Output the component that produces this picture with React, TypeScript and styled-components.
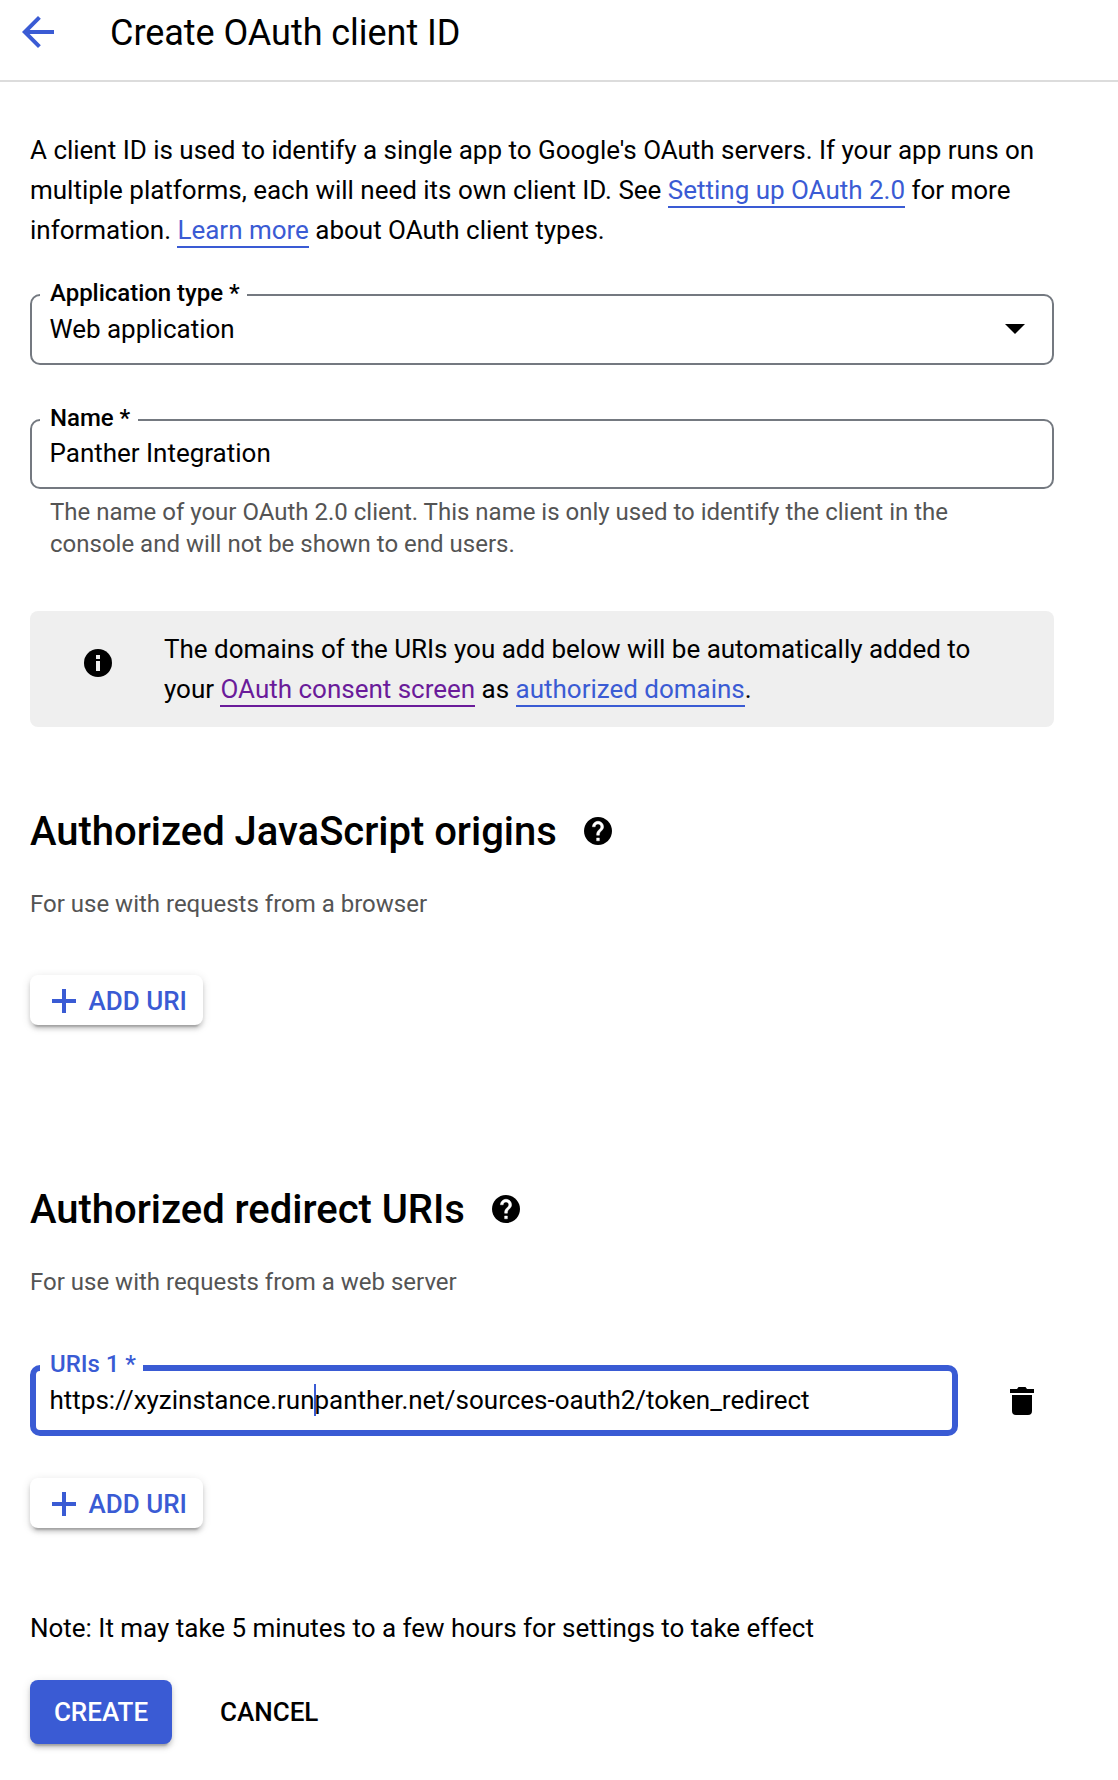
import React from "react";
import styled, { createGlobalStyle, css } from "styled-components";

const BLUE = "#3a5bd4";
const GREY = "#747980";

const GlobalStyle = createGlobalStyle`
  * { box-sizing: border-box; }
  html, body { margin: 0; background: #fff; }
  body { color: #000; font: 400 26px/40px Roboto, "Open Sans", sans-serif; }
`;

const Page = styled.div`
  width: 1118px;
  height: 1780px;
  overflow: hidden;
  background: #fff;
`;

const Header = styled.header`
  display: flex;
  align-items: center;
  height: 82px;
  padding: 0 14px 18px;
  border-bottom: 2px solid #dcdcdc;
`;

const BackIcon = styled.svg`
  width: 48px;
  height: 48px;
  margin-top: 2px;
  fill: ${BLUE};
`;

const Title = styled.h1`
  margin: 4px 0 0 48px;
  font-size: 36px;
  font-weight: 400;
  line-height: 48px;
  letter-spacing: -0.04px;
`;

const Main = styled.main`
  display: flex;
  flex-direction: column;
  padding: 48px 64px 0 30px;
`;

const Intro = styled.p`
  margin: 0;
  letter-spacing: -0.014px;
`;

const Link = styled.a<{ $visited?: boolean }>`
  padding-bottom: 1px;
  color: ${(p) => (p.$visited ? "#6a1b9a" : BLUE)};
  border-bottom: 2px solid currentColor;
`;

const Field = styled.fieldset<{ $active?: boolean; $height: number; $lift: number }>`
  display: flex;
  align-items: center;
  width: 100%;
  min-width: 0;
  margin: 0;
  height: ${(p) => p.$height}px;
  padding: 0 27px ${(p) => p.$lift}px 18px;
  border: 2px solid ${GREY};
  border-radius: 10px;
  ${(p) =>
    p.$active &&
    css`
      width: 928px;
      padding-left: 14px;
      border: 6px solid ${BLUE};
    `}
`;

const Legend = styled.legend<{ $active?: boolean }>`
  margin-left: -10px;
  padding: 0 7.5px 0 10px;
  height: 28px;
  font-size: 24px;
  font-weight: 500;
  line-height: ${(p) => (p.$active ? 20 : 24)}px;
  letter-spacing: -0.03px;
  color: ${(p) => (p.$active ? BLUE : "#000")};
`;

const Value = styled.span`
  flex: 1;
  display: flex;
  margin-left: -0.5px;
  line-height: 32px;
  letter-spacing: -0.01px;
`;

const Caret = styled.i`
  width: 2px;
  height: 32px;
  margin: 0 -1px;
  background: ${BLUE};
`;

const DropArrow = styled.svg`
  width: 20px;
  height: 10px;
`;

const FieldGroup = styled.div<{ $top: number }>`
  margin-top: ${(p) => p.$top}px;
`;

const Hint = styled.p`
  margin: 7px 0 0;
  padding: 0 60px 0 20px;
  font-size: 24px;
  line-height: 32px;
  color: #545454;
`;

const Notice = styled.aside`
  display: flex;
  align-items: flex-start;
  height: 116px;
  margin-top: 51px;
  padding: 18px 52px 18px 54px;
  border-radius: 8px;
  background: #efefef;
`;

const RoundIcon = styled.svg`
  flex: none;
  width: 28px;
  height: 28px;
`;

const InfoIcon = styled(RoundIcon)`
  margin-top: 20px;
`;

const QuestionIcon = styled(RoundIcon)`
  margin-bottom: 2px;
`;

const NoticeText = styled.p`
  margin: 0 0 0 52px;
  letter-spacing: -0.012px;
`;

const Section = styled.section<{ $top: number }>`
  margin-top: ${(p) => p.$top}px;
`;

const HeadingRow = styled.div`
  display: flex;
  align-items: center;
  gap: 27px;
`;

const Heading = styled.h2`
  margin: 0;
  font-size: 40px;
  font-weight: 500;
  line-height: 48px;
  letter-spacing: -0.02px;
`;

const Sub = styled.p`
  margin: 32px 0 0;
  font-size: 24px;
  line-height: 32px;
  color: #545454;
`;

const AddButton = styled.button`
  display: flex;
  align-items: center;
  gap: 12.5px;
  width: 173px;
  height: 50px;
  padding: 2px 0 0 22px;
  border: 0;
  border-radius: 8px;
  background: #fff;
  color: ${BLUE};
  font: 500 26px/40px Roboto, sans-serif;
  white-space: nowrap;
  box-shadow: 0 6px 2px -4px rgba(0, 0, 0, 0.2), 0 4px 4px rgba(0, 0, 0, 0.14), 0 2px 10px rgba(0, 0, 0, 0.12);
`;

const UriRow = styled.div`
  display: flex;
  align-items: center;
`;

const TrashIcon = styled.svg`
  width: 24px;
  height: 28px;
  margin: 12px 0 0 52px;
`;

const Note = styled.p`
  margin: 80px 0 0;
  letter-spacing: -0.014px;
`;

const Actions = styled.div`
  display: flex;
  margin-top: 32px;
`;

const Action = styled.button<{ $primary?: boolean }>`
  height: 64px;
  margin-left: 48px;
  padding: 0;
  border: 0;
  border-radius: 8px;
  background: none;
  color: #000;
  font: 500 26px/40px Roboto, sans-serif;
  ${(p) =>
    p.$primary &&
    css`
      width: 142px;
      margin: 0;
      background: ${BLUE};
      color: #fff;
      box-shadow: 0 6px 2px -4px rgba(0, 0, 0, 0.2), 0 4px 4px rgba(0, 0, 0, 0.14), 0 2px 10px rgba(0, 0, 0, 0.12);
    `}
`;

const HelpIcon = () => (
  <QuestionIcon viewBox="2 2 20 20">
    <path d="M12 2C6.48 2 2 6.48 2 12s4.48 10 10 10 10-4.48 10-10S17.52 2 12 2z" />
    <path
      fill="#fff"
      stroke="#fff"
      strokeWidth="0.3"
      d="M13 19h-2v-2h2v2zm2.07-7.75l-.9.92C13.45 12.9 13 13.5 13 15h-2v-.5c0-1.1.45-2.1 1.17-2.83l1.24-1.26c.37-.36.59-.86.59-1.41 0-1.1-.9-2-2-2s-2 .9-2 2H8c0-2.21 1.790-4 4-4s4 1.790 4 4c0 .88-.36 1.680-.93 2.250z"
    />
  </QuestionIcon>
);

const AddUri = () => (
  <AddButton>
    <svg width="24" height="24" viewBox="0 0 24 24">
      <path d="M10 0h4v10h10v4H14v10h-4V14H0v-4h10z" fill={BLUE} />
    </svg>
    ADD URI
  </AddButton>
);

export default function App() {
  return (
    <Page>
      <GlobalStyle />
      <Header>
        <BackIcon viewBox="0 0 24 24">
          <path d="M20 11H7.83l5.59-5.59L12 4l-8 8 8 8 1.41-1.41L7.83 13H20v-2z" />
        </BackIcon>
        <Title>Create OAuth client ID</Title>
      </Header>
      <Main>
        <Intro>
          A client ID is used to identify a single app to Google's OAuth servers. If your app runs on
          multiple platforms, each will need its own client ID. See <Link>Setting up OAuth 2.0</Link> for
          more information. <Link>Learn more</Link> about OAuth client types.
        </Intro>
        <FieldGroup $top={31}>
          <Field $height={84} $lift={14}>
            <Legend>Application type *</Legend>
            <Value>Web application</Value>
            <DropArrow viewBox="0 0 20 10">
              <path d="M0 0h20L10 10z" />
            </DropArrow>
          </Field>
        </FieldGroup>
        <FieldGroup $top={41}>
          <Field $height={83} $lift={15}>
            <Legend>Name *</Legend>
            <Value>Panther Integration</Value>
          </Field>
          <Hint>
            The name of your OAuth 2.0 client. This name is only used to identify the client in the console
            and will not be shown to end users.
          </Hint>
        </FieldGroup>
        <Notice>
          <InfoIcon viewBox="0 0 28 28">
            <circle cx="14" cy="14" r="14" />
            <path d="M12 6h4v4h-4zM12 12h4v10h-4z" fill="#efefef" />
          </InfoIcon>
          <NoticeText>
            The domains of the URIs you add below will be automatically added to your{" "}
            <Link $visited>OAuth consent screen</Link> as <Link>authorized domains</Link>.
          </NoticeText>
        </Notice>
        <Section $top={81}>
          <HeadingRow>
            <Heading>Authorized JavaScript origins</Heading>
            <HelpIcon />
          </HeadingRow>
          <Sub>For use with requests from a browser</Sub>
          <FieldGroup $top={55}>
            <AddUri />
          </FieldGroup>
        </Section>
        <Section $top={161}>
          <HeadingRow>
            <Heading>Authorized redirect URIs</Heading>
            <HelpIcon />
          </HeadingRow>
          <Sub>For use with requests from a web server</Sub>
          <FieldGroup $top={56}>
            <UriRow>
              <Field $active $height={82} $lift={12}>
                <Legend $active>URIs 1 *</Legend>
                <Value>
                  https://xyzinstance.run
                  <Caret />
                  panther.net/sources-oauth2/token_redirect
                </Value>
              </Field>
              <TrashIcon viewBox="0 0 24 28">
                <path d="M0 2h7l1.500-2h7L17 2h7v4H0zM2 8h20v16a4 4 0 0 1-4 4H6a4 4 0 0 1-4-4z" />
              </TrashIcon>
            </UriRow>
          </FieldGroup>
          <FieldGroup $top={42}>
            <AddUri />
          </FieldGroup>
        </Section>
        <Note>Note: It may take 5 minutes to a few hours for settings to take effect</Note>
        <Actions>
          <Action $primary>CREATE</Action>
          <Action>CANCEL</Action>
        </Actions>
      </Main>
    </Page>
  );
}
